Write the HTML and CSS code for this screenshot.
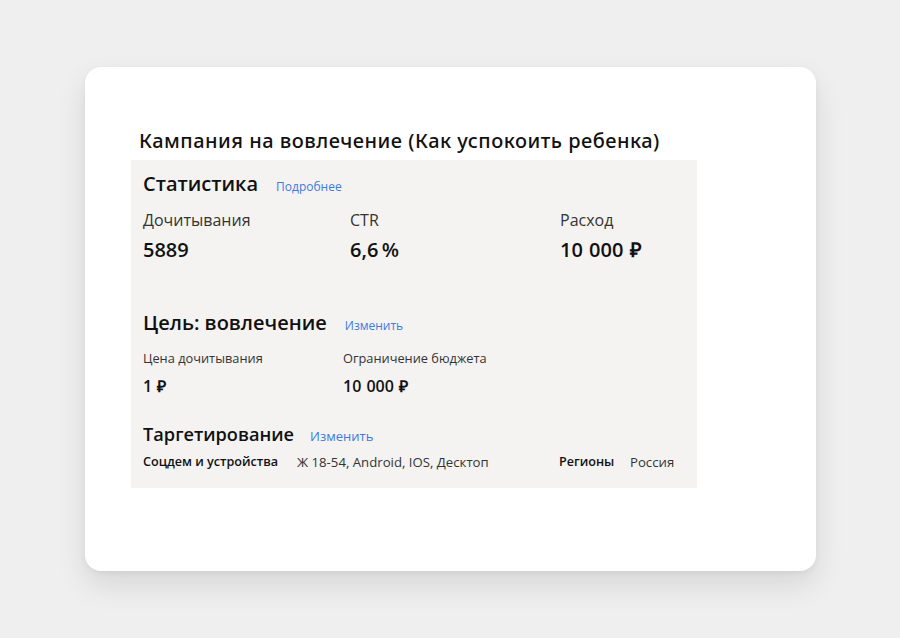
FILE: index.html
```html
<!DOCTYPE html>
<html lang="ru">
<head>
    <meta charset="UTF-8">
    <meta name="viewport" content="width=device-width, initial-scale=1.0">
    <title>Кампания на вовлечение</title>
    <link rel="stylesheet" href="styles.css">
</head>
<body>

<div class="card">
    <h1 class="campaign-title">Кампания на вовлечение (Как успокоить ребенка)</h1>

    <div class="panel">
        <!-- Статистика -->
        <div class="section-head">
            <h2 class="section-title">Статистика</h2>
            <a class="link link-small" href="#">Подробнее</a>
        </div>
        <div class="stats">
            <div class="stat-label">Дочитывания</div>
            <div class="stat-label">CTR</div>
            <div class="stat-label">Расход</div>
            <div class="stat-value">5889</div>
            <div class="stat-value">6,6&thinsp;%</div>
            <div class="stat-value">10 000 ₽</div>
        </div>

        <!-- Цель -->
        <div class="section-head goal-head">
            <h2 class="section-title">Цель: вовлечение</h2>
            <a class="link link-small" href="#">Изменить</a>
        </div>
        <div class="goal">
            <div class="goal-label">Цена дочитывания</div>
            <div class="goal-label">Ограничение бюджета</div>
            <div class="goal-value">1 ₽</div>
            <div class="goal-value">10 000 ₽</div>
        </div>

        <!-- Таргетирование -->
        <div class="section-head target-head">
            <h2 class="section-title target-title">Таргетирование</h2>
            <a class="link" href="#">Изменить</a>
        </div>
        <div class="target">
            <span class="target-key">Соцдем и устройства</span>
            <span class="target-val">Ж 18-54, Android, IOS, Десктоп</span>
            <span class="target-key">Регионы</span>
            <span class="target-val">Россия</span>
        </div>
    </div>
</div>

</body>
</html>
```

FILE: styles.css
```css
html {
    background-color: #efefef;
}

body {
    margin: 0;
    padding: 67px 0 67px 85px;
    min-height: 100vh;
    box-sizing: border-box;
    font-family: "Open Sans", "Liberation Sans", sans-serif;
    color: #1a1a1a;
}

.card {
    width: 731px;
    height: 504px;
    padding: 60px 0 0 46px;
    box-sizing: border-box;
    background-color: #fff;
    border-radius: 16px;
    box-shadow: 0 14px 30px rgba(0, 0, 0, 0.1), 0 2px 6px rgba(0, 0, 0, 0.05);
}

.campaign-title {
    margin: 0 0 5px 8px;
    font-family: "Noto Sans", sans-serif;
    font-size: 20px;
    font-weight: 500;
    line-height: 28px;
    letter-spacing: 0.5px;
    color: #111;
}

.panel {
    width: 566px;
    box-sizing: border-box;
    padding: 12px 12px 18px 12px;
    background-color: #f4f3f2;
}

.section-head {
    display: flex;
    align-items: baseline;
    gap: 18px;
}

.section-title {
    margin: 0;
    font-size: 20px;
    font-weight: 600;
    line-height: 24px;
    color: #111;
}

.link {
    color: #3d7be0;
    text-decoration: none;
    font-size: 13px;
}

.link-small {
    font-size: 12px;
}

/* блок статистики */
.stats {
    display: grid;
    grid-template-columns: 207px 210px auto;
    margin-top: 14px;
}

.stat-label {
    font-size: 16px;
    line-height: 20px;
    color: #333;
    margin-bottom: 7px;
}

.stat-value {
    font-size: 20px;
    font-weight: 600;
    line-height: 26px;
    word-spacing: 1px;
    color: #111;
}

/* цель */
.goal-head {
    margin-top: 47px;
}

.goal-head .section-title {
    line-height: 25px;
}

.goal {
    display: grid;
    grid-template-columns: 200px auto;
    margin-top: 15px;
}

.goal-label {
    font-size: 12.8px;
    line-height: 16px;
    color: #333;
    margin-bottom: 10px;
}

.goal-value {
    font-size: 16px;
    font-weight: 600;
    line-height: 20px;
    word-spacing: 1px;
    color: #111;
}

/* таргетирование */
.target-head {
    margin-top: 26px;
    gap: 16px;
}

.target-title {
    font-size: 18.2px;
}

.target {
    display: grid;
    grid-template-columns: 154px 262px 71px auto;
    margin-top: 8px;
    line-height: 16px;
}

.target-key {
    font-size: 12.6px;
    font-weight: 600;
    color: #111;
}

.target-val {
    font-size: 13.2px;
    color: #333;
}
```
